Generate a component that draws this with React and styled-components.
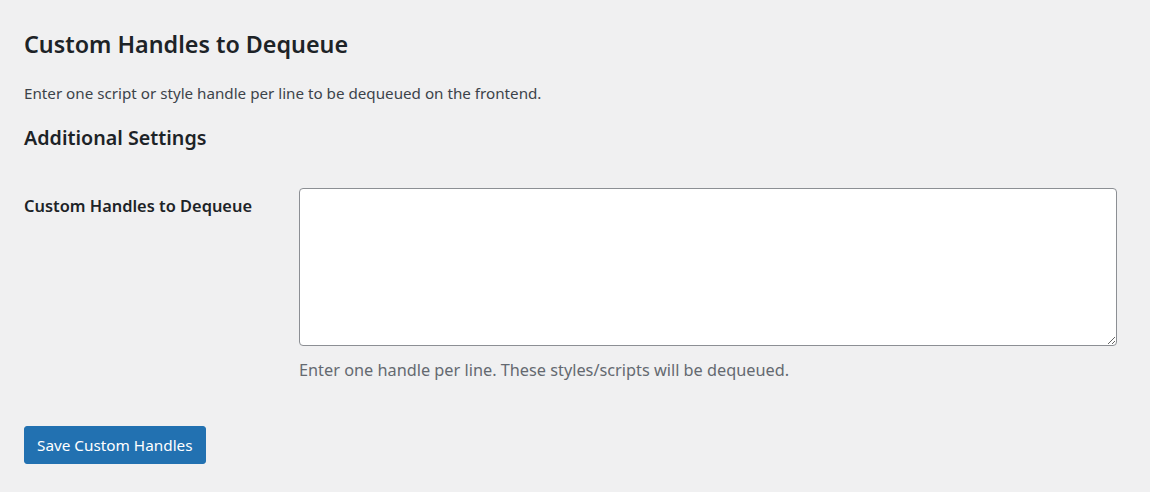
import React from "react";
import styled, { createGlobalStyle } from "styled-components";

const GlobalStyle = createGlobalStyle`
  html, body {
    margin: 0;
    background: #f0f0f1;
  }
  body {
    font-family: "Noto Sans", "Open Sans", sans-serif;
    color: #1d2327;
  }
`;

const Wrap = styled.div`
  padding: 29px 24px 24px 24px;
`;

const Title = styled.h1`
  font-size: 23.3px;
  font-weight: 600;
  margin: 0 0 23px;
  line-height: 1.3;
`;

const Intro = styled.p`
  font-size: 15.2px;
  color: #3c434a;
  margin: 0 0 20px;
  line-height: 1.5;
`;

const SubTitle = styled.h2`
  font-size: 19.7px;
  font-weight: 600;
  margin: 0 0 37px;
  line-height: 1.3;
`;

const Row = styled.div`
  display: flex;
  align-items: flex-start;
`;

const Label = styled.label`
  width: 275px;
  flex-shrink: 0;
  font-size: 16.4px;
  font-weight: 600;
  padding-top: 7px;
  line-height: 1.4;
`;

const Field = styled.div`
  flex: 1;
  padding-right: 9px;
`;

const TextArea = styled.textarea`
  display: block;
  box-sizing: border-box;
  width: 100%;
  height: 158px;
  border: 1px solid #8c8f94;
  border-radius: 4px;
  background: #fff;
  margin: 0;
  padding: 6px 8px;
  font-family: inherit;
`;

const Hint = styled.p`
  font-size: 16.3px;
  color: #646970;
  margin: 12px 0 0;
  line-height: 1.5;
`;

const SaveButton = styled.button`
  margin-top: 44px;
  background: #2271b1;
  border: 1px solid #2271b1;
  border-radius: 3px;
  color: #fff;
  font-family: inherit;
  font-size: 15.3px;
  height: 38px;
  padding: 0 12px;
  cursor: pointer;
`;

const App = () => (
  <>
    <GlobalStyle />
    <Wrap>
      <Title>Custom Handles to Dequeue</Title>
      <Intro>Enter one script or style handle per line to be dequeued on the frontend.</Intro>
      <SubTitle>Additional Settings</SubTitle>
      <Row>
        <Label>Custom Handles to Dequeue</Label>
        <Field>
          <TextArea />
          <Hint>Enter one handle per line. These styles/scripts will be dequeued.</Hint>
        </Field>
      </Row>
      <SaveButton>Save Custom Handles</SaveButton>
    </Wrap>
  </>
);

export default App;
